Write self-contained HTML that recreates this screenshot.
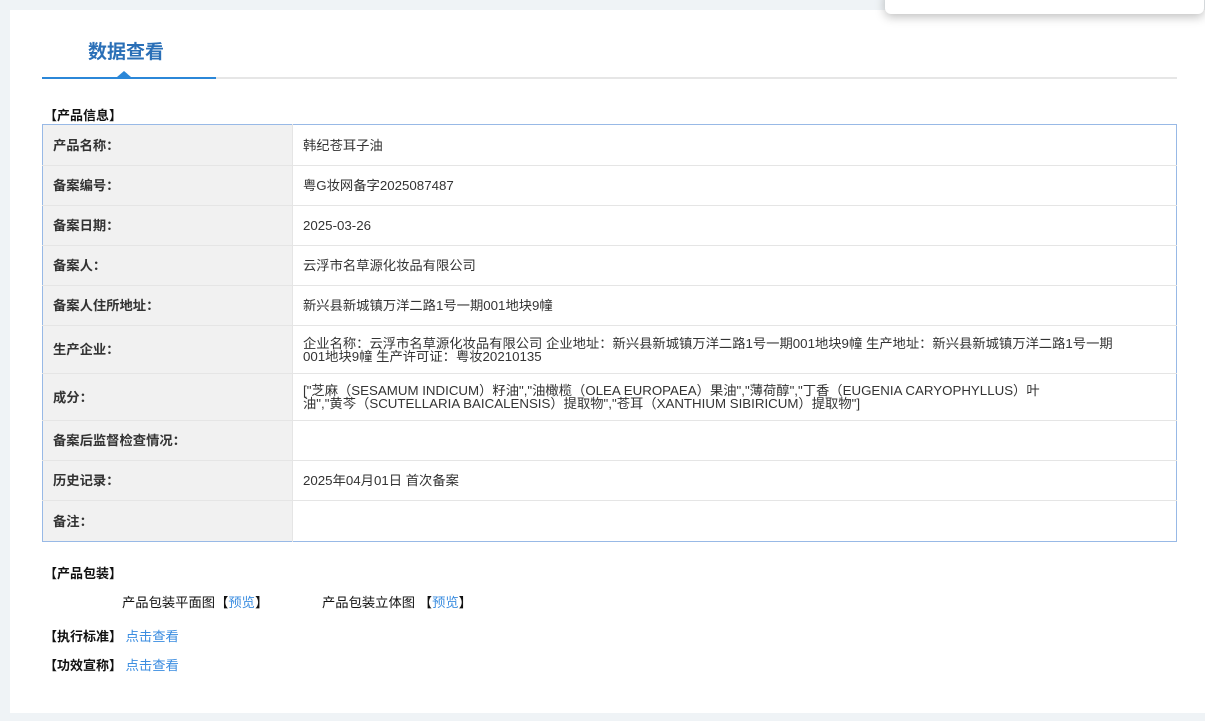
<!DOCTYPE html>
<html><head><meta charset="utf-8"><style>
body{margin:0;width:1205px;height:721px;background:#eff3f6;font-family:"Liberation Sans","Noto Sans CJK SC",sans-serif;position:relative;overflow:hidden}
.panel{position:absolute;left:10px;top:10px;width:1195px;height:703px;background:#fff}
.pop{position:absolute;left:885px;top:-10px;width:319px;height:24px;background:#fff;border-radius:6px;box-shadow:0 3px 10px rgba(0,0,0,.25)}
.title{position:absolute;left:88px;top:37px;font-size:19px;font-weight:bold;color:#2a6fb7}
.line{position:absolute;left:42px;top:77px;width:1135px;height:2px;background:#e6e6e6}
.bline{position:absolute;left:42px;top:77px;width:174px;height:2px;background:#2b87d8}
.tri{position:absolute;left:117px;top:71px;width:0;height:0;border-left:7px solid transparent;border-right:7px solid transparent;border-bottom:6px solid #2b87d8}
.h{position:absolute;font-size:13px;font-weight:bold;color:#111}
table{position:absolute;left:42px;top:124px;width:1135px;border-collapse:collapse;border:1px solid #98b9e6;font-size:13.3px;color:#333}
td{border-bottom:1px solid #e5e5e5;padding:0 10px;vertical-align:middle;line-height:13px}
td.l{width:229px;background:#f1f1f1;font-weight:bold;border-right:1px solid #e5e5e5;color:#333}
a{color:#3b8de0;text-decoration:none}
.t{position:absolute;font-size:13.3px;color:#111}
</style></head><body>
<div class="panel"></div>
<div class="pop"></div>
<div class="title">数据查看</div>
<div class="line"></div><div class="bline"></div><div class="tri"></div>
<div class="h" style="left:44px;top:105px">【产品信息】</div>
<table>
<tr style="height:41px"><td class="l">产品名称：</td><td>韩纪苍耳子油</td></tr>
<tr style="height:40px"><td class="l">备案编号：</td><td>粤G妆网备字2025087487</td></tr>
<tr style="height:40px"><td class="l">备案日期：</td><td>2025-03-26</td></tr>
<tr style="height:40px"><td class="l">备案人：</td><td>云浮市名草源化妆品有限公司</td></tr>
<tr style="height:40px"><td class="l">备案人住所地址：</td><td>新兴县新城镇万洋二路1号一期001地块9幢</td></tr>
<tr style="height:48px"><td class="l">生产企业：</td><td>企业名称：云浮市名草源化妆品有限公司 企业地址：新兴县新城镇万洋二路1号一期001地块9幢 生产地址：新兴县新城镇万洋二路1号一期<br>001地块9幢 生产许可证：粤妆20210135</td></tr>
<tr style="height:47px"><td class="l">成分：</td><td>["芝麻（SESAMUM INDICUM）籽油","油橄榄（OLEA EUROPAEA）果油","薄荷醇","丁香（EUGENIA CARYOPHYLLUS）叶<br>油","黄芩（SCUTELLARIA BAICALENSIS）提取物","苍耳（XANTHIUM SIBIRICUM）提取物"]</td></tr>
<tr style="height:40px"><td class="l">备案后监督检查情况：</td><td></td></tr>
<tr style="height:40px"><td class="l">历史记录：</td><td>2025年04月01日 首次备案</td></tr>
<tr style="height:41px"><td class="l" style="border-bottom:none">备注：</td><td style="border-bottom:none"></td></tr>
</table>
<div class="h" style="left:44px;top:563px">【产品包装】</div>
<div class="t" style="left:122px;top:592px">产品包装平面图【<a>预览</a>】</div>
<div class="t" style="left:322px;top:592px">产品包装立体图 【<a>预览</a>】</div>
<div class="h" style="left:44px;top:626px">【执行标准】 <a style="font-weight:normal;font-size:13.3px">点击查看</a></div>
<div class="h" style="left:44px;top:655px">【功效宣称】 <a style="font-weight:normal;font-size:13.3px">点击查看</a></div>
</body></html>
